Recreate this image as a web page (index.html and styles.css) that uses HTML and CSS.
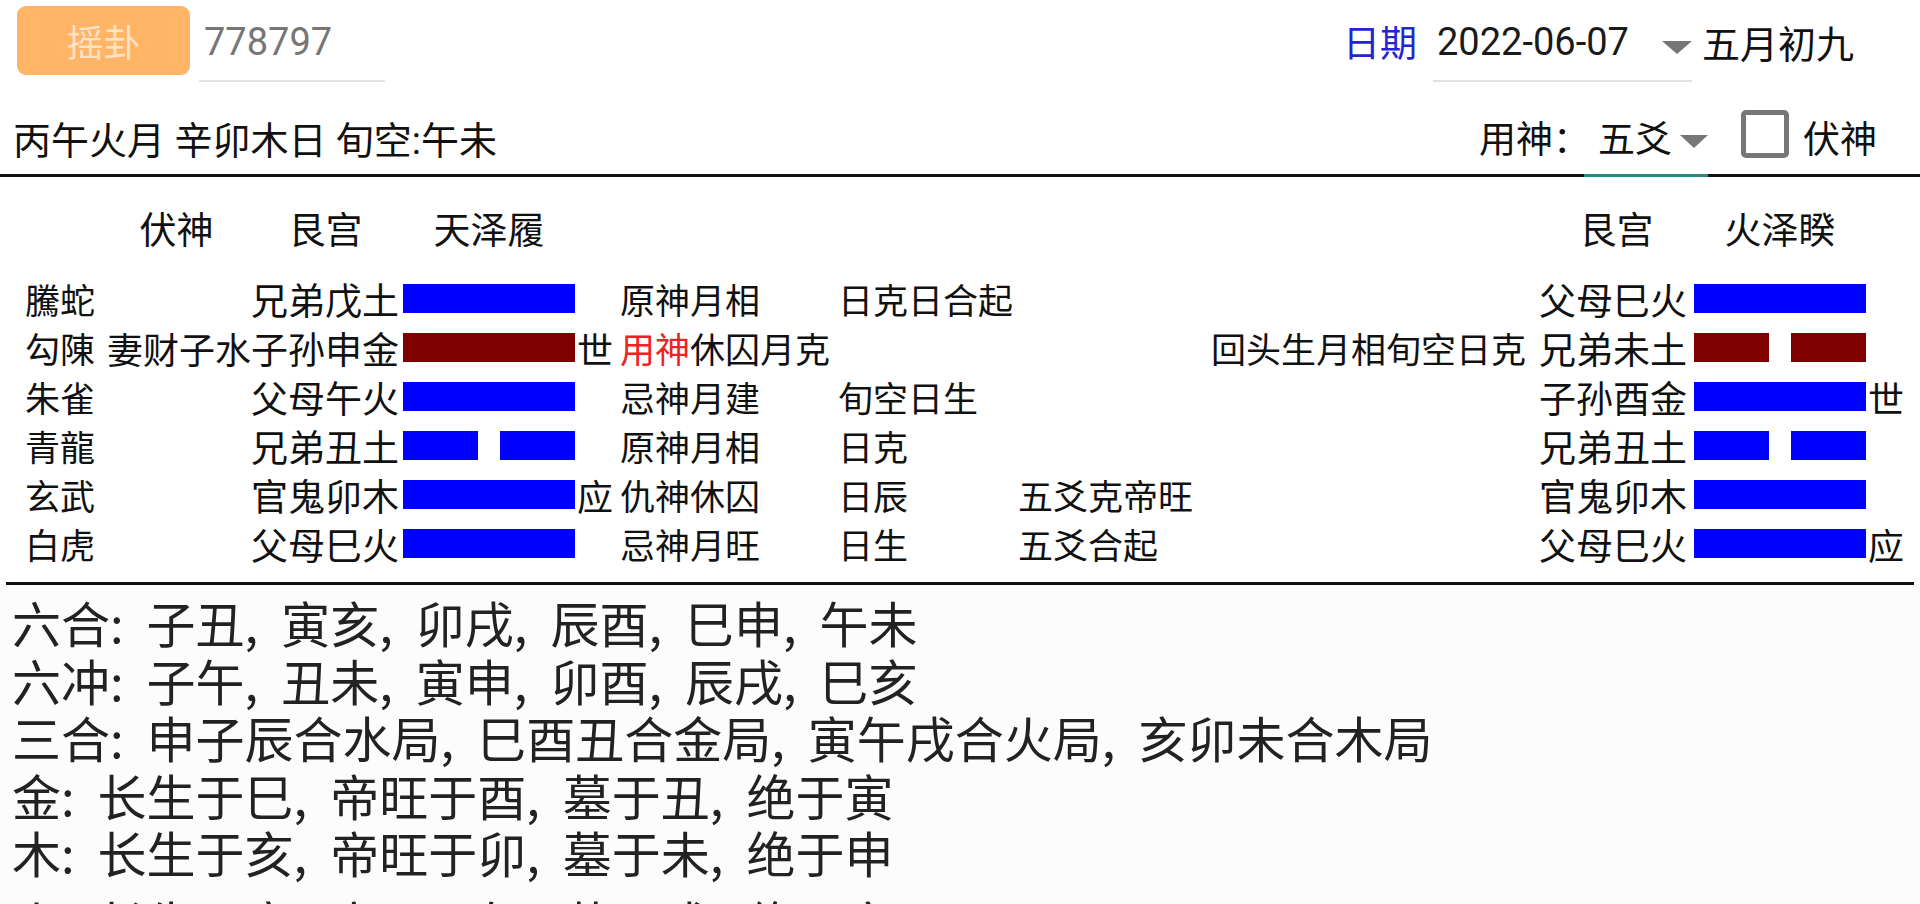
FILE: index.html
```html
<!DOCTYPE html>
<html lang="zh-CN">
<head>
<meta charset="utf-8">
<title>六爻排盘</title>
<link rel="stylesheet" href="styles.css">
</head>
<body>
<div class="topbar">
  <div class="btn">摇卦</div>
  <div class="seed">778797</div>
  <div class="right">
    <div class="date-label">日期</div>
    <div class="date-field"><span>2022-06-07</span><i class="tri tri-top"></i></div>
    <div class="lunar">五月初九</div>
  </div>
</div>

<div class="info">
  <div class="ganzhi">丙午火月 辛卯木日 旬空:午未</div>
  <div class="info-right">
    <div class="ys-label">用神：</div>
    <div class="spinner"><span>五爻</span><i class="tri tri-spin"></i></div>
    <div class="checkbox"></div>
    <div class="cb-label">伏神</div>
  </div>
</div>

<div class="hexa">
  <div class="hrow head">
    <span class="fs c">伏神</span>
    <span class="lq c">艮宫</span>
    <span class="bar-h c">天泽履</span>
    <span class="lq2 c">艮宫</span>
    <span class="bar2-h c">火泽睽</span>
  </div>

  <div class="hrow">
    <span class="ls">騰蛇</span>
    <span class="lq">兄弟戊土</span>
    <span class="bar"><i class="yang"></i></span>
    <span class="d">原神月相</span>
    <span class="e">日克日合起</span>
    <span class="lq2">父母巳火</span>
    <span class="bar2"><i class="yang"></i></span>
  </div>

  <div class="hrow">
    <span class="ls">勾陳</span>
    <span class="fs">妻财子水</span>
    <span class="lq">子孙申金</span>
    <span class="bar"><i class="yang moving"></i></span>
    <span class="sy">世</span>
    <span class="d"><em class="yongshen">用神</em>休囚月克</span>
    <span class="note">回头生月相旬空日克</span>
    <span class="lq2">兄弟未土</span>
    <span class="bar2"><i class="yin moving"><b></b><b></b></i></span>
  </div>

  <div class="hrow">
    <span class="ls">朱雀</span>
    <span class="lq">父母午火</span>
    <span class="bar"><i class="yang"></i></span>
    <span class="d">忌神月建</span>
    <span class="e">旬空日生</span>
    <span class="lq2">子孙酉金</span>
    <span class="bar2"><i class="yang"></i></span>
    <span class="sy2">世</span>
  </div>

  <div class="hrow">
    <span class="ls">青龍</span>
    <span class="lq">兄弟丑土</span>
    <span class="bar"><i class="yin"><b></b><b></b></i></span>
    <span class="d">原神月相</span>
    <span class="e">日克</span>
    <span class="lq2">兄弟丑土</span>
    <span class="bar2"><i class="yin"><b></b><b></b></i></span>
  </div>

  <div class="hrow">
    <span class="ls">玄武</span>
    <span class="lq">官鬼卯木</span>
    <span class="bar"><i class="yang"></i></span>
    <span class="sy">应</span>
    <span class="d">仇神休囚</span>
    <span class="e">日辰</span>
    <span class="f">五爻克帝旺</span>
    <span class="lq2">官鬼卯木</span>
    <span class="bar2"><i class="yang"></i></span>
  </div>

  <div class="hrow">
    <span class="ls">白虎</span>
    <span class="lq">父母巳火</span>
    <span class="bar"><i class="yang"></i></span>
    <span class="d">忌神月旺</span>
    <span class="e">日生</span>
    <span class="f">五爻合起</span>
    <span class="lq2">父母巳火</span>
    <span class="bar2"><i class="yang"></i></span>
    <span class="sy2">应</span>
  </div>
</div>

<div class="rules">
  <p>六合: 子丑, 寅亥, 卯戌, 辰酉, 巳申, 午未</p>
  <p>六冲: 子午, 丑未, 寅申, 卯酉, 辰戌, 巳亥</p>
  <p>三合: 申子辰合水局, 巳酉丑合金局, 寅午戌合火局, 亥卯未合木局</p>
  <p>金: 长生于巳, 帝旺于酉, 墓于丑, 绝于寅</p>
  <p>木: 长生于亥, 帝旺于卯, 墓于未, 绝于申</p>
  <p class="last">火: 长生于寅, 帝旺于午, 墓于戌, 绝于亥</p>
</div>
</body>
</html>
```

FILE: styles.css
```css
* { box-sizing: border-box; }
html, body { margin: 0; padding: 0; }
body {
  width: 1920px;
  height: 904px;
  overflow: hidden;
  background: #ffffff;
  color: #111111;
  font-family: Roboto, "Noto Sans CJK SC", sans-serif;
}

/* ---------- top bar ---------- */
.topbar {
  height: 88px;
  padding-top: 6px;
  display: flex;
  align-items: flex-start;
}
.btn {
  margin-left: 17px;
  width: 173px;
  height: 69px;
  border-radius: 9px;
  background: #ffb466;
  color: #fde2c4;
  font-family: "Noto Sans CJK SC", sans-serif;
  font-size: 37px;
  display: flex;
  align-items: center;
  justify-content: center;
}
.seed {
  margin-left: 9px;
  width: 186px;
  height: 76px;
  padding: 0 0 3px 5px;
  border-bottom: 2px solid #e2e2e2;
  display: flex;
  align-items: center;
  font-size: 38px;
  color: #767676;
}
.right {
  margin-left: auto;
  margin-right: 66px;
  display: flex;
  align-items: flex-start;
}
.date-label {
  height: 70px;
  display: flex;
  align-items: center;
  font-family: "Noto Sans CJK SC", sans-serif;
  font-size: 37px;
  color: #2424d2;
}
.date-field {
  margin-left: 16px;
  width: 259px;
  height: 76px;
  padding: 0 0 3px 4px;
  border-bottom: 2px solid #e2e2e2;
  display: flex;
  align-items: center;
  font-size: 38px;
  color: #1a1a1a;
}
.lunar {
  margin-left: 10px;
  height: 70px;
  display: flex;
  align-items: center;
  font-family: "Noto Sans CJK SC", sans-serif;
  font-size: 38px;
}
.tri {
  display: block;
  width: 0;
  height: 0;
  border-top: 13px solid #767676;
}
.tri-top {
  margin-left: auto;
  margin-top: 12px;
  border-left: 15px solid transparent;
  border-right: 15px solid transparent;
}
.tri-spin {
  margin-left: 8px;
  margin-top: 8px;
  border-left: 14px solid transparent;
  border-right: 14px solid transparent;
}

/* ---------- info row ---------- */
.info {
  height: 89px;
  padding: 12px 43px 0 13px;
  border-bottom: 3px solid #111111;
  display: flex;
  align-items: center;
  font-size: 38px;
}
.ganzhi { white-space: pre; }
.info-right {
  margin-left: auto;
  align-self: stretch;
  display: flex;
  align-items: center;
  font-family: "Noto Sans CJK SC", sans-serif;
  font-size: 37px;
}
.spinner {
  margin-left: -6px;
  padding-left: 14px;
  align-self: stretch;
  margin-bottom: -3px;
  border-bottom: 3px solid #268c7e;
  display: flex;
  align-items: center;
}
.checkbox {
  margin-left: 33px;
  margin-bottom: 7px;
  width: 48px;
  height: 48px;
  border: 5px solid #777777;
  border-radius: 5px;
}
.cb-label { margin-left: 14px; }

/* ---------- hexagram ---------- */
.hexa {
  padding: 26px 0 14px;
  border-bottom: 3px solid #111111;
  margin: 0 6px;
}
.hrow {
  margin: 0 -6px;
  display: grid;
  grid-template-columns: 25px 81px 145px 149px 3px 172px 44px 219px 180px 186px 335px 155px 172px 54px;
  grid-template-rows: 49px;
  align-items: center;
  font-family: "Noto Sans CJK SC", sans-serif;
  font-size: 35px;
  white-space: nowrap;
}
.hrow.head {
  grid-template-rows: 50px;
  margin-bottom: 21px;
  font-size: 37px;
}
.hrow > span { grid-row: 1; }
.ls { grid-column: 2; }
.fs { grid-column: 3; text-align: right; font-size: 36px; }
.lq { grid-column: 4; font-size: 37px; }
.bar, .bar-h { grid-column: 6; }
.sy { grid-column: 7; padding-left: 2px; font-size: 36px; }
.d { grid-column: 8; padding-left: 1px; }
.e { grid-column: 9; }
.f { grid-column: 10; }
.note { grid-column: 11; text-align: right; padding-right: 13px; }
.lq2 { grid-column: 12; font-size: 37px; }
.bar2, .bar2-h { grid-column: 13; }
.sy2 { grid-column: 14; padding-left: 2px; font-size: 36px; }
.hrow.head .c { text-align: center; font-size: 37px; }
.hrow.head .fs { padding-right: 4px; }

.bar, .bar2 { display: block; }
.yang, .yin {
  display: flex;
  height: 29px;
  justify-content: space-between;
}
.yang { background: #0000ff; }
.yang.moving { background: #7f0000; }
.yin b {
  display: block;
  width: 75px;
  height: 29px;
  background: #0000ff;
}
.yin.moving b { background: #7f0000; }
.yongshen { font-style: normal; color: #ee2222; }

/* ---------- rules ---------- */
.rules {
  background: #fcfcfc;
  height: 319px;
  overflow: hidden;
  padding: 8px 0 0 12px;
  font-family: "Noto Sans CJK SC", sans-serif;
  font-size: 49px;
  line-height: 57.5px;
  color: #222222;
  word-spacing: 12px;
}
.rules p {
  margin: 0;
  white-space: nowrap;
}
.rules p.last { margin-top: 12px; }
```
